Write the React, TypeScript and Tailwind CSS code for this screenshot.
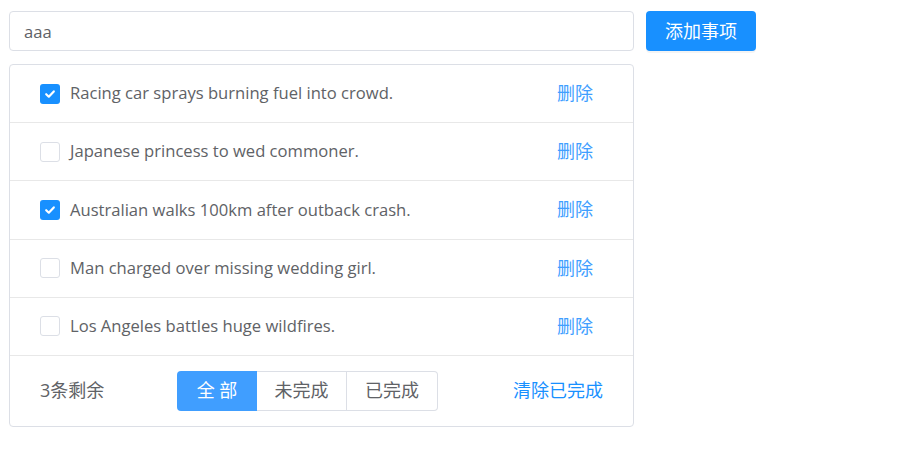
import { useState } from "react";

type Todo = { id: number; text: string; done: boolean };

const initial: Todo[] = [
  { id: 1, text: "Racing car sprays burning fuel into crowd.", done: true },
  { id: 2, text: "Japanese princess to wed commoner.", done: false },
  { id: 3, text: "Australian walks 100km after outback crash.", done: true },
  { id: 4, text: "Man charged over missing wedding girl.", done: false },
  { id: 5, text: "Los Angeles battles huge wildfires.", done: false },
];

function Check({ checked }: { checked: boolean }) {
  if (checked) {
    return (
      <span className="flex h-5 w-5 items-center justify-center rounded-[3px] bg-[#1890ff]">
        <svg width="12" height="12" viewBox="0 0 12 12" fill="none">
          <path d="M2.2 6.2 4.8 8.7 9.8 3.4" stroke="white" strokeWidth="2.2" strokeLinecap="round" strokeLinejoin="round" />
        </svg>
      </span>
    );
  }
  return <span className="block h-5 w-5 rounded-[3px] border border-[#dcdfe6] bg-white" />;
}

export default function App() {
  const [todos] = useState(initial);
  const left = todos.filter((t) => !t.done).length;

  return (
    <div className="min-h-[453px] bg-white px-[9px] pt-[11px] font-['Open_Sans','Noto_Sans_CJK_SC',sans-serif] text-[#606266]">
      <div className="flex gap-3">
        <input
          defaultValue="aaa"
          className="h-10 w-[625px] rounded-[4px] border border-[#dcdfe6] px-[14px] text-[16.6px] text-[#606266] outline-none"
        />
        <button className="h-10 w-[110px] rounded-[4px] bg-[#1890ff] text-[18px] text-white shadow-[0_2px_0_rgba(0,0,0,0.045)]">
          添加事项
        </button>
      </div>

      <div className="mt-[13px] w-[625px] rounded-[4px] border border-[#dcdfe6]">
        {todos.map((t) => (
          <div
            key={t.id}
            className="flex h-[58.2px] items-center border-b border-[#e8e8e8] pl-[30px] pr-[40px]"
          >
            <Check checked={t.done} />
            <span className="ml-[10px] flex-1 text-[16.6px]">{t.text}</span>
            <span className="text-[18px] text-[#409eff]">删除</span>
          </div>
        ))}
        <div className="flex h-[70px] items-center pl-[30px] pr-[30px]">
          <span className="w-[137px] text-[18px]">{left}条剩余</span>
          <div className="flex h-10 text-[18px]">
            <button className="w-20 rounded-l-[4px] bg-[#409eff] text-white">全 部</button>
            <button className="w-[90px] border-y border-r border-[#dcdfe6]">未完成</button>
            <button className="w-[91px] rounded-r-[4px] border-y border-r border-[#dcdfe6]">已完成</button>
          </div>
          <span className="ml-auto text-[18px] text-[#1890ff]">清除已完成</span>
        </div>
      </div>
    </div>
  );
}
